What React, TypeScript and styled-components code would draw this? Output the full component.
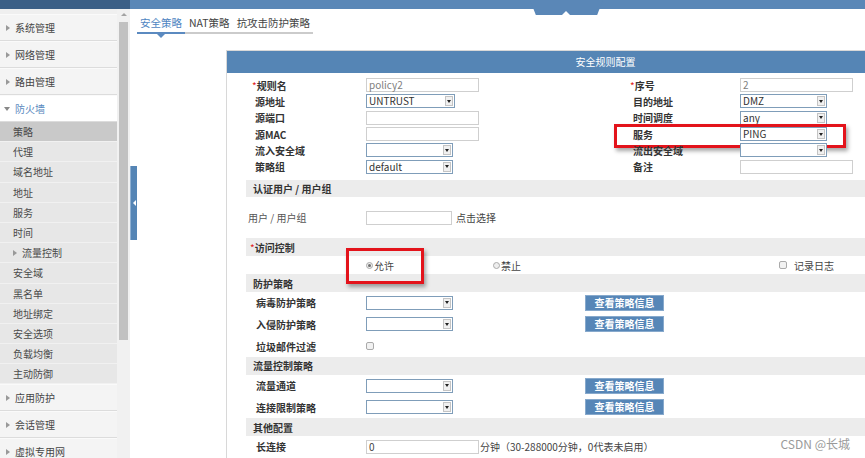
import * as React from "react";
import styled, { createGlobalStyle } from "styled-components";

const GlobalStyle = createGlobalStyle`
  html, body {
    margin: 0;
    padding: 0;
    background: #fff;
  }
  body {
    font-family: "Noto Sans CJK SC", "Microsoft YaHei", sans-serif;
    font-size: 10px;
    color: #333;
  }
  * {
    box-sizing: border-box;
  }
`;

const Page = styled.div`
  position: relative;
  width: 865px;
  height: 458px;
  overflow: hidden;
  display: flex;
  flex-direction: column;
`;

const TopBar = styled.div`
  position: relative;
  flex: 0 0 9px;
  display: flex;
  background: #5a87b7;
`;

const TopBarLeft = styled.div`
  width: 130px;
  background: #3b5f86;
`;

const TopNotch = styled.div`
  position: absolute;
  left: 530px;
  top: 0;
  width: 73px;
  height: 15px;
  background: #5a87b7;
  clip-path: polygon(0 0, 100% 0, 92% 100%, 8% 100%);
  &::after {
    content: "";
    position: absolute;
    left: 32px;
    bottom: 0;
    border-left: 4px solid transparent;
    border-right: 4px solid transparent;
    border-bottom: 4px solid #fff;
  }
`;

const Body = styled.div`
  flex: 1;
  min-height: 0;
  display: flex;
`;

const Sidebar = styled.nav`
  width: 117px;
  flex-shrink: 0;
  background: #efefef;
  padding-top: 5px;
  display: flex;
  flex-direction: column;
`;

const Caret = styled.span<{ $down?: boolean }>`
  width: 0;
  height: 0;
  flex-shrink: 0;
  ${(p) =>
    p.$down
      ? `border-top: 4px solid #888; border-left: 3px solid transparent; border-right: 3px solid transparent;`
      : `border-left: 4px solid #999; border-top: 3px solid transparent; border-bottom: 3px solid transparent;`}
`;

const MenuItem = styled.div<{ $open?: boolean }>`
  height: 27px;
  flex-shrink: 0;
  display: flex;
  align-items: center;
  gap: 5px;
  padding-left: ${(p) => (p.$open ? "4px" : "6px")};
  background: ${(p) => (p.$open ? "#fff" : "#f4f4f4")};
  color: ${(p) => (p.$open ? "#5b8ac0" : "#444")};
  border-bottom: 1px solid #dcdcdc;
  border-top: 1px solid #fafafa;
`;

const SubItem = styled.div<{ $active?: boolean }>`
  height: 20.2px;
  flex-shrink: 0;
  display: flex;
  align-items: center;
  gap: 5px;
  padding-left: 13px;
  background: ${(p) => (p.$active ? "#c9c9c9" : "#e7e7e7")};
  border-bottom: 1px solid #f1f1f1;
  color: #4a4a4a;
`;

const Scrollbar = styled.div`
  width: 13px;
  flex-shrink: 0;
  background: #f1f1f1;
  display: flex;
  flex-direction: column;
  align-items: center;
`;

const ScrollUp = styled.span`
  margin-top: 4px;
  border-left: 3px solid transparent;
  border-right: 3px solid transparent;
  border-bottom: 3px solid #a3a3a3;
`;

const ScrollThumb = styled.div`
  margin-top: 6px;
  width: 9px;
  height: 318px;
  background: #c1c1c1;
`;

const HandleCol = styled.div`
  width: 7px;
  flex-shrink: 0;
  padding-top: 157px;
`;

const Handle = styled.div`
  height: 74px;
  background: #5585b5;
  border-left: 1px solid #8fb0d2;
  display: flex;
  align-items: center;
  justify-content: center;
  &::after {
    content: "";
    border-right: 3px solid #fff;
    border-top: 3px solid transparent;
    border-bottom: 3px solid transparent;
  }
`;

const Main = styled.main`
  flex: 1;
  min-width: 0;
  overflow: hidden;
  display: flex;
  flex-direction: column;
`;

const Tabs = styled.div`
  display: flex;
  gap: 1px;
  align-self: flex-start;
  margin-top: 5px;
  border-bottom: 2px solid #cbcbcb;
`;

const Tab = styled.div<{ $active?: boolean }>`
  position: relative;
  padding: 0 3px;
  line-height: 18px;
  font-size: 10.5px;
  color: ${(p) => (p.$active ? "#4f86c2" : "#444")};
  ${(p) =>
    p.$active
      ? `border-bottom: 2px solid #5b8ac0; margin-bottom: -2px;
         &::after {
           content: "";
           position: absolute;
           left: 50%;
           margin-left: -4px;
           bottom: -6px;
           border-top: 4px solid #5b8ac0;
           border-left: 4px solid transparent;
           border-right: 4px solid transparent;
         }`
      : ""}
`;

const Panel = styled.section`
  margin: 16px 0 0 89px;
  width: 758px;
  flex-shrink: 0;
  border-left: 1px solid #d8d8d8;
  border-top: 1px solid #d8d8d8;
`;

const PanelHeader = styled.div`
  height: 22px;
  line-height: 22px;
  background: #5585b5;
  color: #fff;
  text-align: center;
  font-size: 10px;
`;

const PanelBody = styled.div`
  padding: 4px 0 0 19px;
`;

const TopForm = styled.div`
  display: flex;
  margin-bottom: 5px;
`;

const FormHalf = styled.div<{ $w?: number }>`
  display: flex;
  flex-direction: column;
  width: ${(p) => (p.$w ? `${p.$w}px` : "auto")};
`;

const Field = styled.div<{ $marked?: boolean }>`
  position: relative;
  height: 16.3px;
  display: flex;
  align-items: center;
  ${(p) =>
    p.$marked
      ? `&::after {
           content: "";
           position: absolute;
           left: -19px;
           top: -2px;
           width: 226px;
           height: 18px;
           border: 3px solid #e3131b;
           box-shadow: 2px 3px 4px rgba(0, 0, 0, 0.35);
         }`
      : ""}
`;

const Label = styled.div<{ $w: number; $pad?: number; $plain?: boolean }>`
  width: ${(p) => p.$w}px;
  padding-left: ${(p) => p.$pad ?? 0}px;
  flex-shrink: 0;
  font-weight: ${(p) => (p.$plain ? "normal" : "bold")};
  color: ${(p) => (p.$plain ? "#555" : "#333")};
  white-space: nowrap;
`;

const Star = styled.span`
  color: #e02020;
  margin-left: -3px;
  font-weight: normal;
`;

const TextBox = styled.div<{ $w: number; $muted?: boolean }>`
  width: ${(p) => p.$w}px;
  height: 14px;
  border: 1px solid #cfcfcf;
  padding-left: 2px;
  line-height: 12px;
  font-size: 10px;
  color: ${(p) => (p.$muted ? "#808080" : "#444")};
  background: #fff;
`;

const SelectBox = styled.div<{ $w: number }>`
  width: ${(p) => p.$w}px;
  height: 14px;
  border: 1px solid #7f9db9;
  display: flex;
  background: #fff;
`;

const SelectValue = styled.span`
  flex: 1;
  padding-left: 2px;
  line-height: 12px;
  color: #333;
`;

const SelectArrow = styled.span`
  width: 8px;
  margin: 1px;
  border: 1px solid #c4c4c4;
  background: #f0f0f0;
  display: flex;
  align-items: center;
  justify-content: center;
  &::after {
    content: "";
    border-top: 3px solid #222;
    border-left: 2px solid transparent;
    border-right: 2px solid transparent;
  }
`;

const SectionBar = styled.div`
  height: 17.5px;
  display: flex;
  align-items: center;
  padding-left: 7px;
  background: #ececec;
  font-weight: bold;
  color: #333;
`;

const UserRow = styled.div`
  height: 41px;
  display: flex;
  align-items: center;
`;

const Hint = styled.span<{ $gap?: number }>`
  margin-left: ${(p) => p.$gap ?? 4}px;
  color: #444;
`;

const RadioRow = styled.div`
  height: 18.5px;
  display: grid;
  grid-template-columns: 120px 127px 286px auto;
  align-items: center;
`;

const Choice = styled.div<{ $marked?: boolean }>`
  position: relative;
  display: flex;
  align-items: center;
  gap: 1px;
  color: #444;
  ${(p) =>
    p.$marked
      ? `&::after {
           content: "";
           position: absolute;
           left: -20px;
           top: -10px;
           width: 72px;
           height: 30px;
           border: 3px solid #e3131b;
           box-shadow: 2px 3px 4px rgba(0, 0, 0, 0.35);
         }`
      : ""}
`;

const Radio = styled.span<{ $checked?: boolean }>`
  width: 7px;
  height: 7px;
  border-radius: 50%;
  border: 1px solid #aaa;
  background: #eee;
  display: flex;
  align-items: center;
  justify-content: center;
  &::after {
    content: "";
    width: 3px;
    height: 3px;
    border-radius: 50%;
    background: ${(p) => (p.$checked ? "#6f6f6f" : "transparent")};
  }
`;

const Check = styled.span`
  width: 8px;
  height: 8px;
  border-radius: 2px;
  border: 1px solid #aaa;
  background: #f2f2f2;
  margin-right: 6px;
`;

const PolicyRow = styled.div`
  height: 21.8px;
  display: flex;
  align-items: center;
`;

const InfoButton = styled.div`
  margin-left: 132px;
  width: 79px;
  height: 16px;
  line-height: 14px;
  border: 1px solid #87a9cc;
  background: #5686b7;
  color: #fff;
  font-weight: bold;
  text-align: center;
  font-size: 10px;
`;

const Watermark = styled.div`
  position: absolute;
  right: 15px;
  bottom: 7px;
  line-height: 14px;
  font-size: 12px;
  color: #9a9a9a;
`;

type Row = { label: string; req?: boolean; kind: "text" | "select"; value?: string; muted?: boolean; w?: number; marked?: boolean };

const leftRows: Row[] = [
  { label: "规则名", req: true, kind: "text", value: "policy2", muted: true },
  { label: "源地址", kind: "select", value: "UNTRUST", w: 89 },
  { label: "源端口", kind: "text" },
  { label: "源MAC", kind: "text" },
  { label: "流入安全域", kind: "select", w: 87 },
  { label: "策略组", kind: "select", value: "default", w: 87 },
];

const rightRows: Row[] = [
  { label: "序号", req: true, kind: "text", value: "2", muted: true },
  { label: "目的地址", kind: "select", value: "DMZ", w: 87 },
  { label: "时间调度", kind: "select", value: "any", w: 87 },
  { label: "服务", kind: "select", value: "PING", w: 87, marked: true },
  { label: "流出安全域", kind: "select", w: 87 },
  { label: "备注", kind: "text" },
];

const menuSubs = ["策略", "代理", "域名地址", "地址", "服务", "时间", "流量控制", "安全域", "黑名单", "地址绑定", "安全选项", "负载均衡", "主动防御"];

function Select({ w, value }: { w: number; value?: string }) {
  return (
    <SelectBox $w={w}>
      <SelectValue>{value}</SelectValue>
      <SelectArrow />
    </SelectBox>
  );
}

function FormField({ row, labelWidth, pad }: { row: Row; labelWidth: number; pad: number }) {
  return (
    <Field $marked={row.marked}>
      <Label $w={labelWidth} $pad={pad}>
        {row.req && <Star>*</Star>}
        {row.label}
      </Label>
      {row.kind === "text" ? (
        <TextBox $w={113} $muted={row.muted}>{row.value}</TextBox>
      ) : (
        <Select w={row.w ?? 87} value={row.value} />
      )}
    </Field>
  );
}

export default function App() {
  return (
    <>
      <GlobalStyle />
      <Page>
        <TopBar>
          <TopBarLeft />
          <TopNotch />
        </TopBar>
        <Body>
          <Sidebar>
            {["系统管理", "网络管理", "路由管理"].map((m) => (
              <MenuItem key={m}>
                <Caret />
                {m}
              </MenuItem>
            ))}
            <MenuItem $open>
              <Caret $down />
              防火墙
            </MenuItem>
            {menuSubs.map((s, i) => (
              <SubItem key={s} $active={i === 0}>
                {s === "流量控制" && <Caret />}
                {s}
              </SubItem>
            ))}
            {["应用防护", "会话管理", "虚拟专用网"].map((m) => (
              <MenuItem key={m}>
                <Caret />
                {m}
              </MenuItem>
            ))}
          </Sidebar>
          <Scrollbar>
            <ScrollUp />
            <ScrollThumb />
          </Scrollbar>
          <HandleCol>
            <Handle />
          </HandleCol>
          <Main>
            <Tabs>
              <Tab $active>安全策略</Tab>
              <Tab>NAT策略</Tab>
              <Tab>抗攻击防护策略</Tab>
            </Tabs>
            <Panel>
              <PanelHeader>安全规则配置</PanelHeader>
              <PanelBody>
                <TopForm>
                  <FormHalf $w={387}>
                    {leftRows.map((r) => (
                      <FormField key={r.label} row={r} labelWidth={120} pad={9} />
                    ))}
                  </FormHalf>
                  <FormHalf>
                    {rightRows.map((r) => (
                      <FormField key={r.label} row={r} labelWidth={107} pad={0} />
                    ))}
                  </FormHalf>
                </TopForm>

                <SectionBar>认证用户 / 用户组</SectionBar>
                <UserRow>
                  <Label $w={120} $pad={2} $plain>
                    用户 / 用户组
                  </Label>
                  <TextBox $w={86} />
                  <Hint>点击选择</Hint>
                </UserRow>

                <SectionBar>
                  <Star>*</Star>访问控制
                </SectionBar>
                <RadioRow>
                  <span />
                  <Choice $marked>
                    <Radio $checked />
                    允许
                  </Choice>
                  <Choice>
                    <Radio />
                    禁止
                  </Choice>
                  <Choice>
                    <Check />
                    记录日志
                  </Choice>
                </RadioRow>

                <SectionBar>防护策略</SectionBar>
                <PolicyRow>
                  <Label $w={120} $pad={10}>病毒防护策略</Label>
                  <Select w={87} />
                  <InfoButton>查看策略信息</InfoButton>
                </PolicyRow>
                <PolicyRow>
                  <Label $w={120} $pad={10}>入侵防护策略</Label>
                  <Select w={87} />
                  <InfoButton>查看策略信息</InfoButton>
                </PolicyRow>
                <PolicyRow>
                  <Label $w={120} $pad={10}>垃圾邮件过滤</Label>
                  <Check />
                </PolicyRow>

                <SectionBar>流量控制策略</SectionBar>
                <PolicyRow>
                  <Label $w={120} $pad={10}>流量通道</Label>
                  <Select w={87} />
                  <InfoButton>查看策略信息</InfoButton>
                </PolicyRow>
                <PolicyRow>
                  <Label $w={120} $pad={10}>连接限制策略</Label>
                  <Select w={87} />
                  <InfoButton>查看策略信息</InfoButton>
                </PolicyRow>

                <SectionBar>其他配置</SectionBar>
                <PolicyRow>
                  <Label $w={120} $pad={10}>长连接</Label>
                  <TextBox $w={113}>0</TextBox>
                  <Hint $gap={1}>分钟（30-288000分钟，0代表未启用）</Hint>
                </PolicyRow>
              </PanelBody>
            </Panel>
          </Main>
        </Body>
        <Watermark>CSDN @长城</Watermark>
      </Page>
    </>
  );
}
